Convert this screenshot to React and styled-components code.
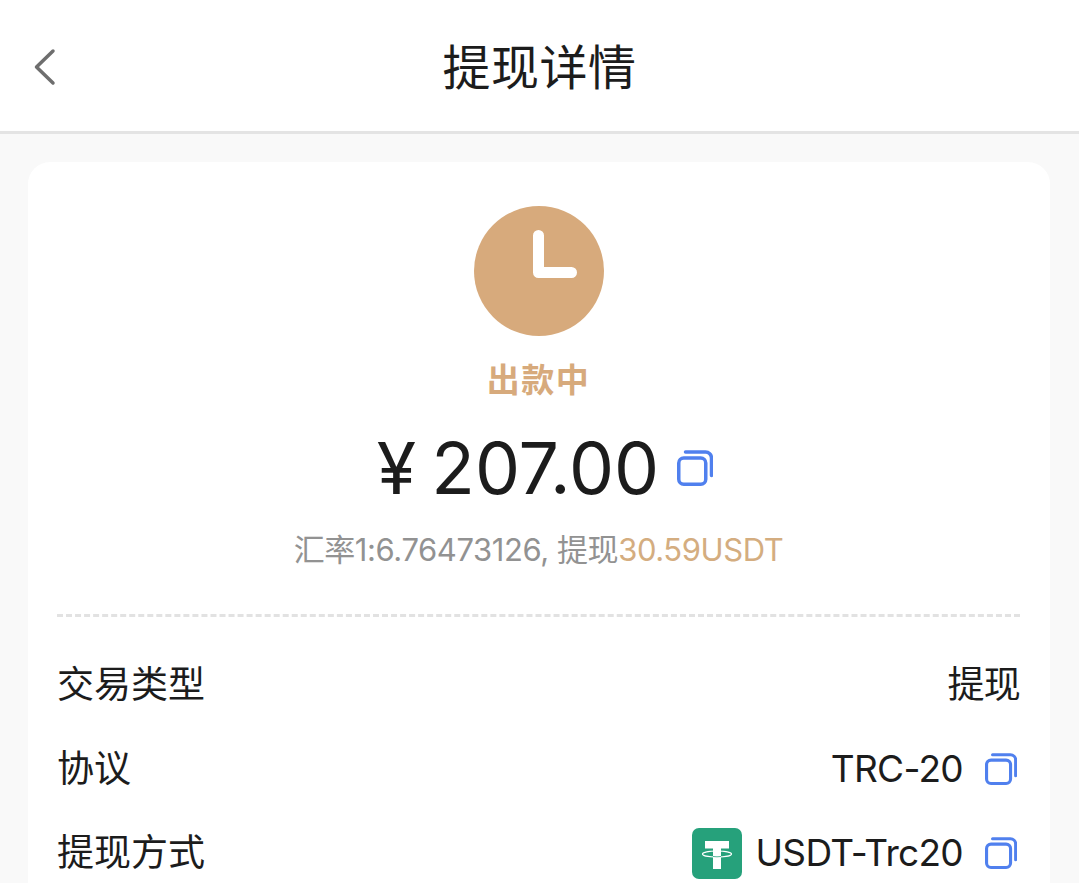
import styled, { createGlobalStyle } from 'styled-components';

const FONT = `Inter, "Noto Sans CJK SC", sans-serif`;

const GlobalStyle = createGlobalStyle`
    html, body {
        margin: 0;
        height: 100%;
        background: #f9f9f9;
        overflow: hidden;
    }
    * {
        box-sizing: border-box;
    }
`;

const CopyIcon = ({ size = 32, className }) => (
    <svg className={className} width={size} height={size} viewBox="0 0 36 36" fill="none">
        <rect x="1.750" y="8" width="27" height="26.250" rx="5" stroke="#5080ee" strokeWidth="3.500" />
        <path d="M8.500 2h20a6 6 0 0 1 6 6v17.500" stroke="#5080ee" strokeWidth="3.500" strokeLinecap="round" />
    </svg>
);

const TetherIcon = () => (
    <svg width="50" height="51" viewBox="0 0 50 51">
        <rect width="50" height="51" rx="7" fill="#26a17b" />
        <path d="M13 13h24v7.500h-8V41h-8V20.500h-8z" fill="#fff" />
        <ellipse cx="25" cy="26" rx="14.500" ry="3" fill="none" stroke="#fff" strokeWidth="1.200" />
        <path d="M21 28.500q4 .6 8 0" fill="none" stroke="#26a17b" strokeWidth=".8" />
    </svg>
);

const Row = ({ label, children }) => (
    <StyledRow>
        <StyledLabel>{label}</StyledLabel>
        <StyledValue>{children}</StyledValue>
    </StyledRow>
);

export default function App() {
    return (
        <StyledPage>
            <GlobalStyle />
            <StyledHeader>
                <StyledBack width="26" height="38" viewBox="0 0 26 38" fill="none">
                    <path d="M22 3 5.500 19 22 35" stroke="#6e6e6e" strokeWidth="3.500" strokeLinecap="round" strokeLinejoin="round" />
                </StyledBack>
                <StyledTitle>提现详情</StyledTitle>
            </StyledHeader>
            <StyledBody>
                <StyledCard>
                    <StyledSummary>
                        <StyledClock>
                            <StyledHands width="130" height="130" viewBox="0 0 130 130" fill="none">
                                <path d="M64.500 29.500v37h33" stroke="#fff" strokeWidth="11" strokeLinecap="round" strokeLinejoin="round" />
                            </StyledHands>
                        </StyledClock>
                        <StyledStatus>出款中</StyledStatus>
                        <StyledAmountRow>
                            <StyledAmount>¥ 207.00</StyledAmount>
                            <CopyIcon size={36} />
                        </StyledAmountRow>
                        <StyledRate>
                            汇率1:6.76473126, 提现<StyledRateValue>30.59USDT</StyledRateValue>
                        </StyledRate>
                    </StyledSummary>
                    <StyledRows>
                        <Row label="交易类型">提现</Row>
                        <Row label="协议">
                            TRC-20
                            <StyledRowCopy />
                        </Row>
                        <Row label="提现方式">
                            <TetherIcon />
                            USDT-Trc20
                            <StyledRowCopy />
                        </Row>
                    </StyledRows>
                </StyledCard>
            </StyledBody>
        </StyledPage>
    );
}

const StyledPage = styled.div`
    height: 883px;
    overflow: hidden;
    background: #f9f9f9;
    font-family: ${FONT};
    color: #1c1c1c;
`;

const StyledHeader = styled.header`
    position: relative;
    display: flex;
    justify-content: center;
    align-items: center;
    height: 134px;
    background: #fff;
    border-bottom: 3px solid #e4e4e4;
`;

const StyledBack = styled.svg`
    position: absolute;
    left: 31px;
    top: 48px;
`;

const StyledTitle = styled.h1`
    margin: 4px 0 0;
    font-size: 48px;
    font-weight: 400;
    letter-spacing: 0.5px;
    line-height: 1;
`;

const StyledBody = styled.main`
    padding: 28px 29px 0 28px;
`;

const StyledCard = styled.section`
    background: #fff;
    border-radius: 22px;
    padding: 44px 30px 40px 29px;
`;

const StyledSummary = styled.div`
    display: flex;
    flex-direction: column;
    align-items: center;
    padding-bottom: 43px;
    border-bottom: 3px dashed #e2e2e2;
`;

const StyledClock = styled.div`
    width: 130px;
    height: 130px;
    border-radius: 50%;
    background: #d7aa7c;
`;

const StyledHands = styled.svg`
    display: block;
`;

const StyledStatus = styled.div`
    margin-top: 21px;
    font-size: 33px;
    line-height: 46px;
    font-weight: 700;
    letter-spacing: 1.5px;
    color: #d7aa7c;
`;

const StyledAmountRow = styled.div`
    display: flex;
    align-items: center;
    gap: 18px;
    margin: 21px 0 0 13px;
    height: 88px;
`;

const StyledAmount = styled.div`
    font-size: 71.5px;
    line-height: 88px;
    font-weight: 400;
    word-spacing: -5px;
`;

const StyledRowCopy = styled(CopyIcon)`
    flex: none;
    margin: 0 3px 0 8px;
`;

const StyledRate = styled.div`
    margin-top: 17px;
    font-size: 31px;
    line-height: 42px;
    letter-spacing: -0.42px;
    color: #929292;
`;

const StyledRateValue = styled.span`
    color: #d4ad80;
`;

const StyledRows = styled.div`
    display: flex;
    flex-direction: column;
    gap: 32px;
    padding-top: 42px;
`;

const StyledRow = styled.div`
    display: flex;
    justify-content: space-between;
    align-items: center;
    height: 52px;
`;

const StyledLabel = styled.div`
    font-size: 37px;
    line-height: 52px;
`;

const StyledValue = styled.div`
    display: flex;
    align-items: center;
    gap: 14px;
    font-size: 37px;
    line-height: 52px;
    letter-spacing: -0.7px;
`;
